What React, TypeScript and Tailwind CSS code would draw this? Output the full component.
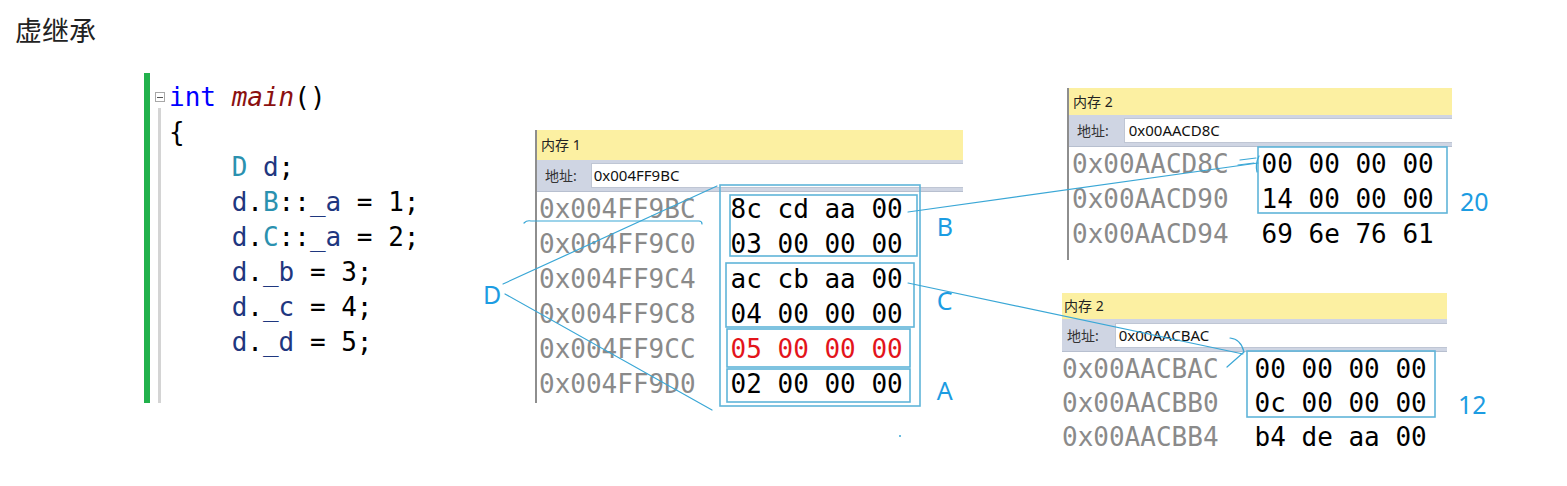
const MONO = "font-['DejaVu_Sans_Mono',monospace]";
const UI = "font-['Noto_Sans','Noto_Sans_CJK_SC',sans-serif]";
const LABEL = "font-['Noto_Sans',sans-serif] text-[25px] leading-[30px] text-[#1c9ce2]";

const V = "text-[#1f377f]";
const T = "text-[#2b91af]";

function CodeBlock() {
  return (
    <div className="ml-[144px] mt-[13px] flex h-[330px] w-[339px]">
      <div className="w-[6px] bg-[#22b14c]" />
      <div className="flex w-[19px] flex-col items-center">
        <div className="mt-[19px] flex h-[10px] w-[10px] items-center justify-center border border-[#a8a8a8] bg-white">
          <div className="h-px w-[6px] bg-[#555]" />
        </div>
        <div className="mt-[6px] w-[3px] flex-1 bg-[#d4d4d4]" />
      </div>
      <div className={`${MONO} whitespace-pre pt-[7px] text-[26px] leading-[35px] text-black`}>
        <div>
          <span className="text-[#0000ff]">int</span> <span className="italic text-[#8b1010]">main</span>()
        </div>
        <div>{"{"}</div>
        <div>
          {"    "}<span className={T}>D</span> <span className={V}>d</span>;
        </div>
        <div>
          {"    "}<span className={V}>d</span>.<span className={T}>B</span>::<span className={V}>_a</span> = 1;
        </div>
        <div>
          {"    "}<span className={V}>d</span>.<span className={T}>C</span>::<span className={V}>_a</span> = 2;
        </div>
        <div>
          {"    "}<span className={V}>d</span>.<span className={V}>_b</span> = 3;
        </div>
        <div>
          {"    "}<span className={V}>d</span>.<span className={V}>_c</span> = 4;
        </div>
        <div>
          {"    "}<span className={V}>d</span>.<span className={V}>_d</span> = 5;
        </div>
      </div>
    </div>
  );
}

type Row = { addr: string; data: string; red?: boolean };

const mem1Rows: Row[] = [
  { addr: "0x004FF9BC", data: "8c cd aa 00" },
  { addr: "0x004FF9C0", data: "03 00 00 00" },
  { addr: "0x004FF9C4", data: "ac cb aa 00" },
  { addr: "0x004FF9C8", data: "04 00 00 00" },
  { addr: "0x004FF9CC", data: "05 00 00 00", red: true },
  { addr: "0x004FF9D0", data: "02 00 00 00" },
];

const mem2aRows: Row[] = [
  { addr: "0x00AACD8C", data: "00 00 00 00" },
  { addr: "0x00AACD90", data: "14 00 00 00" },
  { addr: "0x00AACD94", data: "69 6e 76 61" },
];

const mem2bRows: Row[] = [
  { addr: "0x00AACBAC", data: "00 00 00 00" },
  { addr: "0x00AACBB0", data: "0c 00 00 00" },
  { addr: "0x00AACBB4", data: "b4 de aa 00" },
];

function Rows({ rows, rowH }: { rows: Row[]; rowH: string }) {
  return (
    <>
      <div className="text-[#8a8a8a]">
        {rows.map((r) => (
          <div key={r.addr} className={rowH}>{r.addr}</div>
        ))}
      </div>
      <div className="text-black">
        {rows.map((r) => (
          <div key={r.addr} className={`${rowH} ${r.red ? "text-[#e3141b]" : ""}`}>{r.data}</div>
        ))}
      </div>
    </>
  );
}

function Memory1() {
  return (
    <div className={`${UI} ml-[32px] mt-[70px] w-[428px] border-l-2 border-[#8e8e8e]`}>
      <div className="h-[30px] bg-[#fcf0a2] pl-[4px] text-[14px] leading-[30px] text-[#222]">内存 1</div>
      <div className="flex h-[32px] items-center border-b border-[#b7bfcf] bg-[#cfd5e3] pl-[8px] text-[14px] text-[#333]">
        <span>地址:</span>
        <div className="ml-[14px] flex h-[25px] flex-1 items-center border border-r-0 border-[#bfc6d4] bg-white pl-[2px] text-[15px] text-[#111]">
          0x004FF9BC
        </div>
      </div>
      <div className={`${MONO} flex h-[211px] bg-white text-[26px] leading-[35px]`}>
        <div className="flex gap-[35px] pl-[2px]">
          <Rows rows={mem1Rows} rowH="h-[35px]" />
        </div>
        <div className={`${LABEL} ml-[34px] flex flex-col`}>
          <span className="mt-[19px]">B</span>
          <span className="mt-[44px]">C</span>
          <span className="mt-[60px]">A</span>
        </div>
      </div>
    </div>
  );
}

function Memory2Top() {
  return (
    <div className="ml-[5px] flex">
      <div className={`${UI} w-[385px] border-l-2 border-[#8e8e8e]`}>
        <div className="h-[27px] bg-[#fcf0a2] pl-[4px] text-[14px] leading-[27px] text-[#222]">内存 2</div>
        <div className="flex h-[32px] items-center border-b border-[#b7bfcf] bg-[#cfd5e3] pl-[8px] text-[14px] text-[#333]">
          <span>地址:</span>
          <div className="ml-[15px] flex h-[25px] flex-1 items-center border border-r-0 border-[#bfc6d4] bg-white pl-[4px] text-[15px] text-[#111]">
            0x00AACD8C
          </div>
        </div>
        <div className={`${MONO} flex h-[113px] gap-[33px] bg-white pl-[3px] text-[26px] leading-[35px]`}>
          <Rows rows={mem2aRows} rowH="h-[35px]" />
        </div>
      </div>
      <span className={`${LABEL} ml-[8px] mt-[98px]`}>20</span>
    </div>
  );
}

function Memory2Bottom() {
  return (
    <div className="mt-[33px] flex">
      <div className={`${UI} w-[385px]`}>
        <div className="h-[26px] bg-[#fcf0a2] pl-[2px] text-[14px] leading-[26px] text-[#222]">内存 2</div>
        <div className="flex h-[33px] items-center border-b border-[#b7bfcf] bg-[#cfd5e3] pl-[5px] text-[14px] text-[#333]">
          <span>地址:</span>
          <div className="ml-[16px] flex h-[25px] flex-1 items-center border border-r-0 border-[#bfc6d4] bg-white pl-[3px] text-[15px] text-[#111]">
            0x00AACBAC
          </div>
        </div>
        <div className={`${MONO} flex gap-[36px] bg-white text-[26px] leading-[34px]`}>
          <Rows rows={mem2bRows} rowH="h-[34px]" />
        </div>
      </div>
      <span className={`${LABEL} ml-[11px] mt-[96px]`}>12</span>
    </div>
  );
}

function Annotations() {
  const s = "#5fb5d9";
  const l = "#3aa7d6";
  return (
    <svg className="pointer-events-none absolute left-0 top-0" width="1567" height="486" fill="none">
      <g stroke={s} strokeWidth="1.6">
        <rect x="720" y="185" width="200" height="221" />
        <rect x="730" y="195" width="187" height="61" />
        <rect x="726" y="263" width="188" height="64" />
        <rect x="727" y="329" width="183" height="38" />
        <rect x="727" y="369" width="183" height="33" />
        <rect x="1258" y="147" width="189" height="66" />
        <rect x="1247" y="351" width="188" height="66" />
      </g>
      <g stroke={l} strokeWidth="1.2" strokeLinecap="round">
        <line x1="503" y1="284" x2="717" y2="186" />
        <line x1="505" y1="294" x2="712" y2="410" />
        <path d="M524 223 q3 -3 7 -2 L699 221 q3 0 3 3" />
        <line x1="908" y1="212" x2="1258" y2="163" />
        <path d="M1240 160 L1256 158 M1238 165 L1254 163 M1259 156 Q1255 164 1257 172" />
        <line x1="908" y1="283" x2="1243" y2="354" />
        <path d="M1230 338 Q1241 339 1244 352 L1227 367" />
      </g>
      <circle cx="900" cy="436" r="1" fill={l} />
    </svg>
  );
}

export default function App() {
  return (
    <div className="relative h-[486px] w-[1567px] overflow-hidden bg-white">
      <div className="h-[60px] pl-[15px] pt-[14px] font-['Noto_Sans_CJK_SC',sans-serif] text-[27px] leading-[32px] text-[#222]">
        虚继承
      </div>
      <div className="flex items-start">
        <CodeBlock />
        <span className={`${LABEL} mt-[219px] w-[20px]`}>D</span>
        <Memory1 />
        <div className="ml-[99px] mt-[28px] flex flex-col">
          <Memory2Top />
          <Memory2Bottom />
        </div>
      </div>
      <Annotations />
    </div>
  );
}
